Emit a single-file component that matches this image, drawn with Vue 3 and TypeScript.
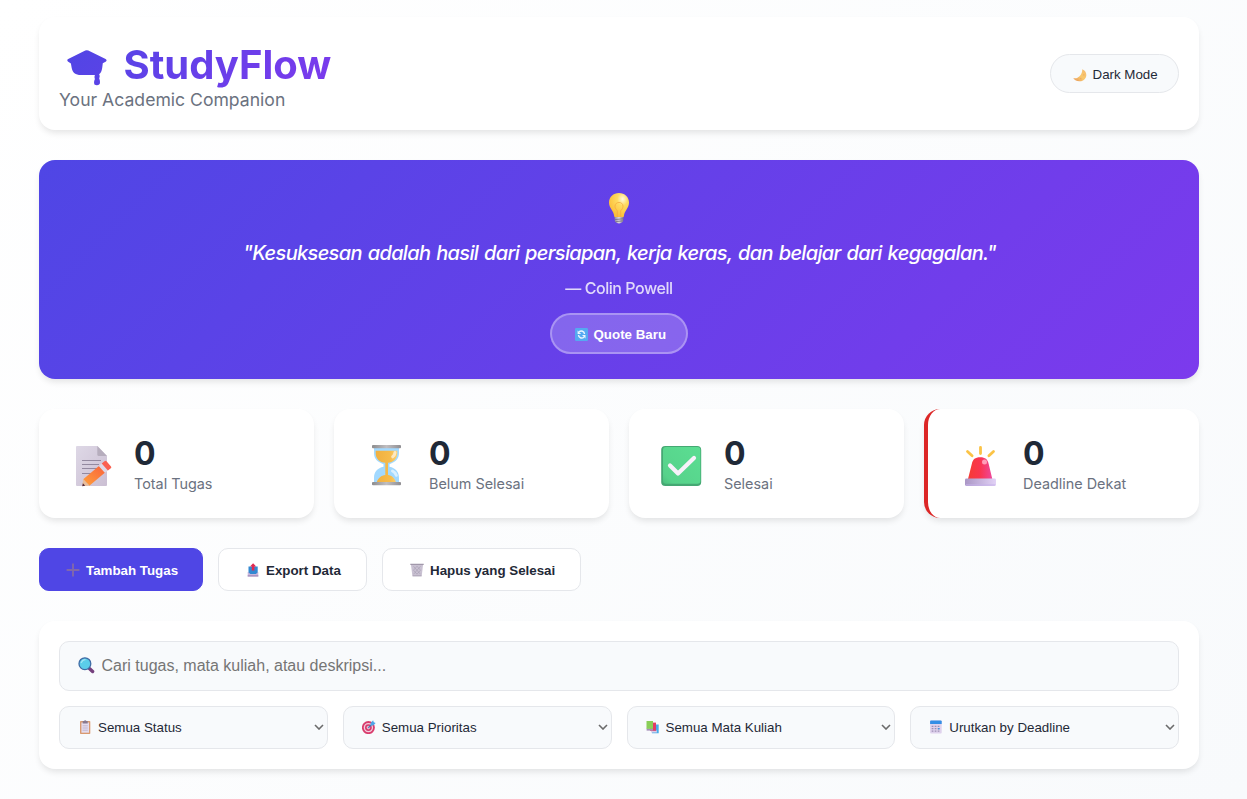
<script setup lang="ts">
import { ref } from 'vue'

interface Stat {
  id: 'total' | 'pending' | 'done' | 'urgent'
  value: number
  label: string
}

interface Filter {
  id: 'status' | 'priority' | 'course' | 'sort'
  label: string
}

const search = ref('')

const stats: Stat[] = [
  { id: 'total', value: 0, label: 'Total Tugas' },
  { id: 'pending', value: 0, label: 'Belum Selesai' },
  { id: 'done', value: 0, label: 'Selesai' },
  { id: 'urgent', value: 0, label: 'Deadline Dekat' },
]

const filters: Filter[] = [
  { id: 'status', label: 'Semua Status' },
  { id: 'priority', label: 'Semua Prioritas' },
  { id: 'course', label: 'Semua Mata Kuliah' },
  { id: 'sort', label: 'Urutkan by Deadline' },
]
</script>

<template>
  <div class="page">
    <main class="container">
      <header class="card header">
        <div class="brand">
          <h1 class="title">
            <svg class="cap" viewBox="0 0 40 36">
              <defs>
                <linearGradient id="capFill" x1="0" y1="0" x2="1" y2="1">
                  <stop offset="0" stop-color="#5145e5" />
                  <stop offset="1" stop-color="#5b43e6" />
                </linearGradient>
              </defs>
              <path
                fill="url(#capFill)"
                d="M18.3.5Q19.8-.2 21.3.5L38.6 9Q40.4 10.1 39 11.4L35.8 13.2 35.2 18C34.6 21.4 33.8 23 32.1 24.3 33.2 26.2 32.5 27 32.2 28.5 33.2 30.8 33.1 32.4 32.7 34Q30.3 36.2 27.4 34.5C26.8 32.5 27 31 27.9 28.9 27.2 27 27.5 26 28 25.1H14C8.3 25.1 5.5 22.3 4.7 18L3.9 13.4.9 11.5Q-.5 10.2 1.2 9.1Z"
              />
            </svg>
            <span class="name">StudyFlow</span>
          </h1>
          <p class="tagline">Your Academic Companion</p>
        </div>
        <button class="theme" type="button">
          <svg class="moon" viewBox="0 0 14 13">
            <defs>
              <linearGradient id="moonFill" x1="1" y1="0" x2="0" y2="1">
                <stop offset="0" stop-color="#f6bb70" />
                <stop offset=".5" stop-color="#f9c86d" />
                <stop offset="1" stop-color="#e99a5c" />
              </linearGradient>
            </defs>
            <path fill="url(#moonFill)" d="M9.300.3C12.800 1.800 14.200 5.200 12.800 8.400 10.400 13.200 3.200 13.800.2 9.100 3.200 9.700 4.800 9 6.500 7.300 8.600 5.200 9.300 3 9.300.3Z" />
            <path fill="#e8a05c" d="M10.200 5.200h1.200v1.400h-1.200zM7 9h1.400v1.200H7zM3.800 10.700h1.600v1H3.800z" opacity=".6" />
          </svg>
          <span>Dark Mode</span>
        </button>
      </header>

      <section class="quote">
        <svg class="bulb" viewBox="0 0 22 32">
          <defs>
            <radialGradient id="bulbFill" cx=".68" cy=".25" r=".75">
              <stop offset="0" stop-color="#fffbe0" />
              <stop offset=".35" stop-color="#ffdc62" />
              <stop offset="1" stop-color="#fbbd38" />
            </radialGradient>
            <linearGradient id="bulbBase">
              <stop offset="0" stop-color="#8d8799" />
              <stop offset=".5" stop-color="#ddd8e1" />
              <stop offset="1" stop-color="#807889" />
            </linearGradient>
          </defs>
          <path fill="url(#bulbFill)" d="M1 10.5C1 4.7 5.3.9 11 .9s10 3.8 10 9.6c0 5.7-4.4 7.8-5.1 13.4-.1 1-1 1.700-2 1.700H8.200c-1 0-1.900-.7-2-1.700C5.500 18.300 1 16.200 1 10.500Z" />
          <path fill="none" stroke="#f5ab40" stroke-width=".8" d="M9.300 25v-6.200C8 17.300 7 16 7 14.200c0-5 8-5 8 0 0 1.800-1 3.100-2.300 4.600V25" />
          <path fill="url(#bulbBase)" d="M6.500 25h9l-.5 4.600q-4 3.800-8 0Z" />
          <path stroke="#766f80" stroke-width=".8" d="m7 27.600 7.900-.8M7.400 29.700l7.200-.8" />
        </svg>
        <p class="quote-text">"Kesuksesan adalah hasil dari persiapan, kerja keras, dan belajar dari kegagalan."</p>
        <p class="author">— Colin Powell</p>
        <button class="refresh" type="button">
          <svg class="cycle" viewBox="0 0 13 13">
            <rect width="13" height="13" rx="1.200" fill="#55a9f1" />
            <path fill="none" stroke="#edf5ff" stroke-width="1.400" d="M3.500 7c.2 2.800 3.200 3.800 5.500 2.200M9.500 6c-.2-2.800-3.200-3.800-5.500-2.200" />
            <path fill="#edf5ff" d="M2.600 2.400v3.500h3.500ZM10.500 10.600V7.100H7Z" />
          </svg>
          <span>Quote Baru</span>
        </button>
      </section>

      <section class="stats">
        <article v-for="s in stats" :key="s.id" class="card stat" :class="s.id">
          <svg v-if="s.id === 'total'" class="stat-icon" viewBox="0 0 54 42">
            <defs>
              <linearGradient id="paper" x1="0" y1="0" x2="1" y2="1">
                <stop offset="0" stop-color="#ded8e6" />
                <stop offset="1" stop-color="#cbbfd3" />
              </linearGradient>
              <linearGradient id="pencil" x1="0" y1="1" x2="1" y2="0">
                <stop offset="0" stop-color="#ffa13c" />
                <stop offset="1" stop-color="#f9603b" />
              </linearGradient>
            </defs>
            <path fill="url(#paper)" d="M9 1h20.500L39 11v29q0 1-1 1H9q-1 0-1-1V2q0-1 1-1Z" />
            <path fill="#b6adbd" d="M29.300 1v8.500q0 1.500 1.500 1.500H39Z" />
            <path stroke="#9389a0" stroke-width="1.200" d="M14 15.500h19M14 19.500h17M14 23.500h15M14 28.500h10" />
            <path fill="url(#pencil)" d="m15.200 34.300 16.300-13.900 6.200 6.700-16.300 13.700Z" />
            <path fill="#e8bd9b" d="M15.200 34.300 21.400 40.800 14.200 41Z" />
            <path fill="#51283b" d="m14.900 38.300 2.300 2.500-3 .4Z" />
            <path fill="#ded8e6" d="m30.700 21.100 3.500-3 6.200 7-3.400 2.800Z" />
            <path fill="#fa6050" d="m33.700 18.500 2.800-2.300q1-1 2 0l4.500 5.200q.8 1-.2 1.800l-2.900 2.300Z" />
          </svg>
          <svg v-else-if="s.id === 'pending'" class="stat-icon" viewBox="0 0 54 42">
            <defs>
              <linearGradient id="sand">
                <stop offset="0" stop-color="#f0b040" />
                <stop offset=".65" stop-color="#f6bb4a" />
                <stop offset="1" stop-color="#fbd070" />
              </linearGradient>
              <linearGradient id="metal">
                <stop offset="0" stop-color="#8c8c8e" />
                <stop offset=".5" stop-color="#c0bec1" />
                <stop offset="1" stop-color="#8f8e92" />
              </linearGradient>
            </defs>
            <path fill="#a2d9ff" d="M11 3h25v5c0 6-3.500 9-9.500 11.200v2.600C32.500 23 36 27 36 33v5H11v-5c0-6 3.500-10 9.500-11.200v-2.600C14.500 17 11 14 11 8Z" />
            <path fill="url(#sand)" d="M12.700 5.800h21.600v2.400c0 5.300-4 9.300-9.300 9.600v12.300c3.800.3 6.700 3 8 7.300H13.700c1.300-4.300 4.700-7 8.600-7.300V17.800c-5.600-.3-9.600-4.300-9.600-9.600Z" />
            <path fill="none" stroke="#fff" stroke-opacity=".6" stroke-width="3" d="M32 7.500q-.3 2.800-2.300 4.300M29.500 26q3 1.500 3.800 4.300" stroke-linecap="round" />
            <rect x="9" y="0" width="29" height="3.300" rx="1" fill="url(#metal)" />
            <rect x="9" y="37" width="29" height="3.300" rx="1" fill="url(#metal)" />
          </svg>
          <svg v-else-if="s.id === 'done'" class="stat-icon" viewBox="0 0 54 42">
            <defs>
              <linearGradient id="tile" x1="0" y1="1" x2="1" y2="0">
                <stop offset="0" stop-color="#4cc07e" />
                <stop offset=".15" stop-color="#57d28b" />
                <stop offset="1" stop-color="#5bde92" />
              </linearGradient>
            </defs>
            <rect x="3.200" y="1" width="40" height="40" rx="4" fill="#45a873" />
            <rect x="5" y="2" width="37.400" height="36.800" rx="3" fill="url(#tile)" />
            <path fill="none" stroke="#f8f1fa" stroke-width="4.200" stroke-linecap="round" stroke-linejoin="round" d="m12 20.500 8 8L36 13" />
          </svg>
          <svg v-else class="stat-icon" viewBox="0 0 54 42">
            <defs>
              <linearGradient id="siren">
                <stop offset="0" stop-color="#f63b34" />
                <stop offset=".5" stop-color="#fa3550" />
                <stop offset="1" stop-color="#ee489c" />
              </linearGradient>
              <linearGradient id="base">
                <stop offset="0" stop-color="#aa96c5" />
                <stop offset="1" stop-color="#e2d2f6" />
              </linearGradient>
            </defs>
            <path stroke="#fbc346" stroke-width="2.800" stroke-linecap="round" d="m10.500 6.500 4.600 4.300M23.500 2.400V8.500M36.500 6.500l-4.600 4.300" />
            <path fill="url(#siren)" d="M11 34 14.800 19C15.900 14.300 18 12.300 23.200 12.300s7.400 2 8.500 6.700L35.300 34Z" />
            <circle cx="27.500" cy="17" r="2.500" fill="#ff9db8" />
            <rect x="8" y="33.500" width="31" height="7.500" rx="1.400" fill="url(#base)" />
            <path stroke="#c6b2ea" d="M8.700 40h29.600" />
          </svg>
          <div class="stat-body">
            <div class="stat-value">{{ s.value }}</div>
            <div class="stat-label">{{ s.label }}</div>
          </div>
        </article>
      </section>

      <section class="actions">
        <button class="action primary" type="button">
          <svg class="small" viewBox="0 0 14 14"><path stroke="#8167ac" stroke-width="1.900" d="M.6 7h12.800M7 .6v12.800" /></svg>
          <span>Tambah Tugas</span>
        </button>
        <button class="action export" type="button">
          <svg class="small" viewBox="0 0 14 14">
            <path fill="#c8b7dc" d="M1.700 9h10.600v4.500H1.700Z" />
            <path fill="#3289d2" d="M2.500 3.500h9.200v5.800L9.900 11H4.300L2.500 9.200Z" />
            <path fill="#e02951" d="m7.100.2 3.100 3.200H8.400v4H5.800v-4H4Z" />
            <path fill="#a48dbb" d="M1.700 12.200h10.600v1.300H1.700Z" />
          </svg>
          <span>Export Data</span>
        </button>
        <button class="action clear" type="button">
          <svg class="small" viewBox="0 0 14 14">
            <path fill="#c9c1d2" d="M1 2h12l-1.300 11.200H2.400Z" />
            <path fill="none" stroke="#aaa2b6" stroke-width=".7" d="m3.500 3.300 7 8M10.500 3.300l-7 8M7 3.200l3.500 4L7 11.200l-3.500-4Z" />
            <path fill="#a198aa" d="M.3.8h13.400v1.300H.3ZM2.700 12.400h8.800v.9H2.700Z" />
          </svg>
          <span>Hapus yang Selesai</span>
        </button>
      </section>

      <section class="card filter-panel">
        <label class="search">
          <svg class="lens" viewBox="0 0 17 17">
            <path stroke="#75407d" stroke-width="3.400" stroke-linecap="round" d="m11.400 11.500 3.200 3" />
            <circle cx="6.900" cy="6.700" r="5.900" fill="#5bcdea" stroke="#3f6ca6" stroke-width="1.300" />
            <path fill="none" stroke="#a0e6f5" stroke-width="1.300" d="M3.300 5.500Q4.500 2.800 7 2.700" stroke-linecap="round" />
          </svg>
          <input v-model="search" type="text" placeholder="Cari tugas, mata kuliah, atau deskripsi..." />
        </label>
        <div class="filters">
          <label v-for="f in filters" :key="f.id" class="filter">
            <svg v-if="f.id === 'status'" class="small" viewBox="0 0 14 14">
              <rect x="2" y="1" width="10.300" height="13" rx=".7" fill="#d99a70" />
              <path fill="#e4dced" d="M3.400 2.500H11v10.200H3.400Z" />
              <path fill="#88798e" d="M4.700 1h1.200q1.300-1.700 2.600 0h1.200v2.400h-5Z" />
              <path stroke="#b4a7c2" stroke-width=".7" d="M4.600 5.800h5.200M4.600 8h5.200M4.600 10.200h5.200" />
            </svg>
            <svg v-else-if="f.id === 'priority'" class="small" viewBox="0 0 14 14">
              <circle cx="6.400" cy="7.600" r="5.600" fill="#f3ccdc" stroke="#d93c6d" stroke-width="1.800" />
              <circle cx="6.400" cy="7.600" r="2.600" fill="#eeb4cb" stroke="#d43c6e" stroke-width="1.600" />
              <path fill="none" stroke="#357fc1" stroke-width="1.100" d="m6.300 7.800 4.300-4.300" />
              <path fill="#4ca5e8" d="M8.700 3.100 11.100.3l.7 2 1.900.6-2.500 2.500-2.400-.1Z" />
            </svg>
            <svg v-else-if="f.id === 'course'" class="small" viewBox="0 0 14 14">
              <path fill="#48ace9" d="M7 4.500h5.700v8.700H6Z" />
              <path fill="#dccce7" d="M5 10.500h5.900v2H5Z" />
              <path fill="#e33b66" d="M4 2.600h6v8.200H4Z" />
              <path fill="#a58eb8" d="M.6 8.400H7v2.200H.6Z" />
              <path fill="#8ace58" d="M.5 1H7v7.800H.5Z" />
            </svg>
            <svg v-else class="small" viewBox="0 0 14 14">
              <rect x="1.100" y=".6" width="11.600" height="13" rx="1" fill="#dfd2ed" />
              <path fill="#348ee6" d="M2 .6h9.700q1 0 1 1v2.500H1.100V1.600q0-1 .9-1Z" />
              <path stroke="#9d8fb4" stroke-width="1.300" stroke-dasharray="1.700 1.300" d="M2.700 6.300H11M2.700 8.700H11M2.700 11.100H11" />
              <path fill="#3c95e3" d="M8.900 8h1.700v1.400H8.900z" />
            </svg>
            <select>
              <option>{{ f.label }}</option>
            </select>
            <svg class="chevron" viewBox="0 0 10 6">
              <path d="m1 1 4 4 4-4" />
            </svg>
          </label>
        </div>
      </section>
    </main>
  </div>
</template>

<style>
body {
  margin: 0;
  overflow: hidden;
}
</style>

<style scoped>
* {
  box-sizing: border-box;
}
.page {
  height: 799px;
  overflow: hidden;
  background: linear-gradient(135deg, #ffffff 0%, #f8fafc 100%);
  color: #1f2937;
  font-family: Inter, sans-serif;
}
.container {
  width: 1160px;
  margin-left: 39px;
  padding-top: 17px;
}
h1,
p {
  margin: 0;
}
svg {
  display: block;
  flex: none;
}
.card {
  background: #fff;
  border-radius: 16px;
  box-shadow: 0 4px 6px -1px rgba(0, 0, 0, 0.1);
}
.header {
  height: 113px;
  margin-bottom: 30px;
  padding: 20px;
  display: flex;
  justify-content: space-between;
  align-items: center;
}
.brand {
  padding-top: 5px;
}
.title {
  display: flex;
  width: 272px;
  height: 48px;
  padding-left: 7.5px;
  line-height: 48px;
  font-size: 40px;
  font-weight: 700;
  background: linear-gradient(135deg, #4f46e5, #7c3aed);
  background-clip: text;
  -webkit-background-clip: text;
  color: transparent;
}
.name {
  margin-top: 1px;
  height: 48px;
}
.cap {
  width: 40px;
  height: 36px;
  margin: 10px 17px 0 0;
}
.tagline {
  color: #6b7280;
  font-size: 17.6px;
  line-height: 24px;
}
button {
  font-family: "Liberation Sans", Arial, sans-serif;
  font-size: 13.333px;
  display: flex;
  align-items: center;
}
.theme {
  width: 129px;
  height: 39px;
  padding: 1px 0 0 22px;
  gap: 5.5px;
  border: 1px solid #e5e7eb;
  border-radius: 25px;
  background: #f8fafc;
  color: #1f2937;
}
.moon {
  width: 14px;
  height: 13px;
  margin-top: 2px;
}
.quote {
  height: 219px;
  margin-bottom: 30px;
  padding-top: 32px;
  display: flex;
  flex-direction: column;
  align-items: center;
  border-radius: 16px;
  background: linear-gradient(135deg, #4f46e5, #7c3aed);
  box-shadow: 0 4px 6px -1px rgba(0, 0, 0, 0.1);
  color: #fff;
}
.bulb {
  width: 22px;
  height: 32px;
}
.quote-text {
  margin-top: 14px;
  padding-left: 1px;
  font-size: 20px;
  line-height: 30px;
  font-style: italic;
  font-weight: 500;
  letter-spacing: -0.66px;
  word-spacing: 1.2px;
}
.author {
  margin-top: 8px;
  font-size: 16px;
  line-height: 24px;
  font-weight: 500;
  letter-spacing: -0.45px;
  opacity: 0.8;
}
.refresh {
  width: 138px;
  height: 41px;
  margin-top: 13px;
  padding: 1px 0 0 22.5px;
  gap: 6px;
  border: 2px solid rgba(255, 255, 255, 0.3);
  border-radius: 25px;
  background: rgba(255, 255, 255, 0.2);
  color: #fff;
  font-weight: 600;
}
.cycle {
  width: 13px;
  height: 13px;
}
.stats {
  display: grid;
  grid-template-columns: repeat(4, 275px);
  gap: 20px;
  margin-bottom: 30px;
}
.stat {
  height: 109px;
  padding: 25px 0 0 29px;
  display: flex;
}
.urgent {
  border-left: 4px solid #dc2626;
}
.stat-icon {
  width: 54px;
  height: 42px;
  margin: 11px 12px 0 0;
}
.stat-body {
  padding-top: 1px;
}
.stat-value {
  font-size: 32px;
  line-height: 38px;
  font-weight: 700;
}
.stat-label {
  color: #6b7280;
  font-size: 14.4px;
  line-height: 22px;
}
.actions {
  display: flex;
  gap: 15px;
  margin-bottom: 30px;
}
.action {
  height: 43px;
  padding: 1px 0 0 27px;
  gap: 6px;
  border: 1px solid #e5e7eb;
  border-radius: 10px;
  background: #fff;
  color: #1f2937;
  font-weight: 600;
}
.primary {
  width: 164px;
  padding-left: 26px;
  border-color: #4f46e5;
  background: #4f46e5;
  color: #fff;
}
.export {
  width: 149px;
}
.clear {
  width: 199px;
}
.small {
  width: 14px;
  height: 14px;
}
.filter-panel {
  height: 148px;
  padding: 20px;
}
.search {
  height: 50px;
  margin-bottom: 15px;
  padding-left: 17.5px;
  display: flex;
  align-items: center;
  gap: 7px;
  border: 1px solid #e5e7eb;
  border-radius: 10px;
  background: #f8fafc;
}
.lens {
  width: 17px;
  height: 17px;
  margin-bottom: 1px;
}
input {
  flex: 1;
  padding: 0;
  border: 0;
  outline: 0;
  background: transparent;
  color: #1f2937;
  font-family: "Liberation Sans", Arial, sans-serif;
  font-size: 16px;
}
input::placeholder {
  color: #757575;
}
.filters {
  display: grid;
  grid-template-columns: repeat(4, 1fr);
  gap: 15px;
}
.filter {
  height: 43px;
  padding: 0 3px 0 18px;
  display: flex;
  align-items: center;
  border: 1px solid #e5e7eb;
  border-radius: 10px;
  background: #f8fafc;
}
.filter .small {
  margin-bottom: 1px;
}
select {
  flex: 1;
  min-width: 0;
  height: 41px;
  padding: 0 0 0 6px;
  border: 0;
  outline: 0;
  appearance: none;
  background: transparent;
  color: #1f2937;
  font-family: "Liberation Sans", Arial, sans-serif;
  font-size: 13.333px;
}
.chevron {
  width: 10px;
  height: 6px;
  margin-bottom: 1px;
}
.chevron path {
  fill: none;
  stroke: #6b6b6b;
  stroke-width: 1.6;
}
</style>
